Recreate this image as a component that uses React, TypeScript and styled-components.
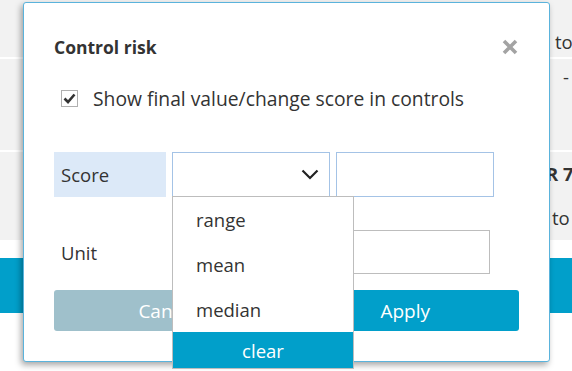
import React from 'react';
import styled, { createGlobalStyle } from 'styled-components';

const Colors = {
  Blue: '#019fca',
  BlueBorder: '#a4c3e6',
  LabelBg: '#dce9f8',
  Grey: '#f2f2f2',
  GreyBorder: '#bdbdbd',
  Cancel: '#9fc0cb',
  Text: '#333333',
};

const GlobalStyle = createGlobalStyle`
  html, body {
    margin: 0;
    padding: 0;
    overflow: hidden;
  }
  body {
    font-family: 'Open Sans', 'Noto Sans', sans-serif;
    color: ${Colors.Text};
    background: #fff;
  }
`;

const Page = styled.div`
  position: relative;
  width: 572px;
  height: 371px;
  overflow: hidden;
  background: #fff;
`;

const Table = styled.div`
  display: flex;
  flex-direction: column;
  gap: 2px;
`;

const Row = styled.div<{ $height: number; $align?: string }>`
  height: ${(p) => p.$height}px;
  background: ${Colors.Grey};
  display: flex;
  flex-direction: column;
  align-items: flex-end;
  justify-content: ${(p) => p.$align || 'center'};
`;

const Cell = styled.div<{ $bold?: boolean; $indent?: number; $top?: number }>`
  width: 19px;
  text-indent: ${(p) => p.$indent || 0}px;
  margin-top: ${(p) => p.$top || 0}px;
  white-space: nowrap;
  font-size: 18.5px;
  line-height: 26px;
  font-weight: ${(p) => (p.$bold ? 700 : 400)};
`;

const BlueBar = styled.div`
  margin-top: 18px;
  height: 55px;
  background: ${Colors.Blue};
`;

// the dialog lies over the page
const Modal = styled.div`
  position: absolute;
  left: 23px;
  top: 2px;
  width: 527px;
  height: 360px;
  box-sizing: border-box;
  background: #fff;
  border: 1px solid #5ab3dc;
  border-radius: 3px;
  box-shadow: -2px 3px 6px rgba(0, 0, 0, 0.35);
  padding: 0 30px;
  display: flex;
  flex-direction: column;
`;

const Header = styled.div`
  display: flex;
  align-items: center;
  justify-content: space-between;
  height: 44px;
  margin-top: 22px;
`;

const Title = styled.div`
  font-size: 17.5px;
  font-weight: 700;
`;

const Close = styled.button`
  border: 0;
  background: none;
  padding: 0;
  width: 16px;
  height: 16px;
  margin-right: 1px;
  cursor: pointer;
  display: flex;
`;

const CheckRow = styled.label`
  display: flex;
  align-items: center;
  gap: 15px;
  height: 24px;
  margin-top: 17px;
  padding-left: 7px;
  font-size: 19.3px;
  white-space: nowrap;
`;

const CheckBox = styled.span`
  flex: none;
  width: 15px;
  height: 15px;
  border: 1px solid #b0b0b0;
  background: #fff;
  display: flex;
  align-items: center;
  justify-content: center;
`;

const Form = styled.div`
  display: flex;
  flex-direction: column;
  gap: 33px;
  margin-top: 42px;
`;

const FieldRow = styled.div<{ $height: number }>`
  display: flex;
  gap: 6px;
  height: ${(p) => p.$height}px;
`;

const FieldLabel = styled.div<{ $bg?: boolean }>`
  width: 112px;
  padding-left: 7px;
  box-sizing: border-box;
  background: ${(p) => (p.$bg ? Colors.LabelBg : 'transparent')};
  font-size: 18.5px;
  display: flex;
  align-items: center;
`;

const SelectWrap = styled.div`
  position: relative;
  width: 158px;
`;

const SelectBox = styled.div`
  height: 45px;
  box-sizing: border-box;
  border: 1px solid ${Colors.BlueBorder};
  display: flex;
  align-items: center;
  justify-content: flex-end;
  padding-right: 10px;
`;

const Input = styled.div<{ $width: number; $grey?: boolean }>`
  width: ${(p) => p.$width}px;
  box-sizing: border-box;
  border: 1px solid ${(p) => (p.$grey ? Colors.GreyBorder : Colors.BlueBorder)};
  background: #fff;
`;

const Menu = styled.ul`
  position: absolute;
  top: 44px;
  left: 0;
  width: 182px;
  margin: 0;
  padding: 0;
  list-style: none;
  background: #fff;
  border: 1px solid ${Colors.GreyBorder};
  box-sizing: border-box;
  z-index: 2;
`;

const MenuItem = styled.li<{ $active?: boolean }>`
  height: ${(p) => (p.$active ? 36 : 45)}px;
  display: flex;
  align-items: center;
  justify-content: ${(p) => (p.$active ? 'center' : 'flex-start')};
  padding-left: ${(p) => (p.$active ? 0 : 23)}px;
  font-size: 18.5px;
  background: ${(p) => (p.$active ? Colors.Blue : '#fff')};
  color: ${(p) => (p.$active ? '#fff' : Colors.Text)};
`;

const Buttons = styled.div`
  display: flex;
  gap: 10px;
  margin-top: 16px;
`;

const Button = styled.button<{ $primary?: boolean }>`
  flex: 1;
  height: 41px;
  border: 0;
  border-radius: 3px;
  background: ${(p) => (p.$primary ? Colors.Blue : Colors.Cancel)};
  color: #fff;
  font-family: inherit;
  font-size: 19px;
`;

const Chevron = () => (
  <svg width="18" height="11" viewBox="0 0 18 11">
    <polyline points="1.5,1.5 9,9 16.5,1.5" fill="none" stroke="#222" strokeWidth="2.2" />
  </svg>
);

const CloseIcon = () => (
  <svg width="16" height="16" viewBox="0 0 16 16">
    <path d="M2 2 L14 14 M14 2 L2 14" stroke="#a3a3a3" strokeWidth="3.6" />
  </svg>
);

const Check = () => (
  <svg width="13" height="11" viewBox="0 0 13 11">
    <polyline points="1.5,5.5 5,9 11.5,1.5" fill="none" stroke="#333" strokeWidth="2.6" />
  </svg>
);

const App: React.FC = () => (
  <Page>
    <GlobalStyle />
    <Table>
      <Row $height={57} $align="center">
        <Cell $indent={2} $top={26}>to 10</Cell>
      </Row>
      <Row $height={91} $align="flex-start">
        <Cell $indent={10} $top={5}>-</Cell>
      </Row>
      <Row $height={88} $align="space-around">
        <Cell $bold $indent={-7}>R 7.5</Cell>
        <Cell $indent={-1}>to 20</Cell>
      </Row>
    </Table>
    <BlueBar />

    <Modal>
      <Header>
        <Title>Control risk</Title>
        <Close aria-label="Close">
          <CloseIcon />
        </Close>
      </Header>
      <CheckRow>
        <CheckBox>
          <Check />
        </CheckBox>
        Show final value/change score in controls
      </CheckRow>
      <Form>
        <FieldRow $height={45}>
          <FieldLabel $bg>Score</FieldLabel>
          <SelectWrap>
            <SelectBox>
              <Chevron />
            </SelectBox>
            <Menu>
              <MenuItem>range</MenuItem>
              <MenuItem>mean</MenuItem>
              <MenuItem>median</MenuItem>
              <MenuItem $active>clear</MenuItem>
            </Menu>
          </SelectWrap>
          <Input $width={158} />
        </FieldRow>
        <FieldRow $height={44}>
          <FieldLabel>Unit</FieldLabel>
          <Input $width={318} $grey />
        </FieldRow>
      </Form>
      <Buttons>
        <Button>Cancel</Button>
        <Button $primary>Apply</Button>
      </Buttons>
    </Modal>
  </Page>
);

export default App;
